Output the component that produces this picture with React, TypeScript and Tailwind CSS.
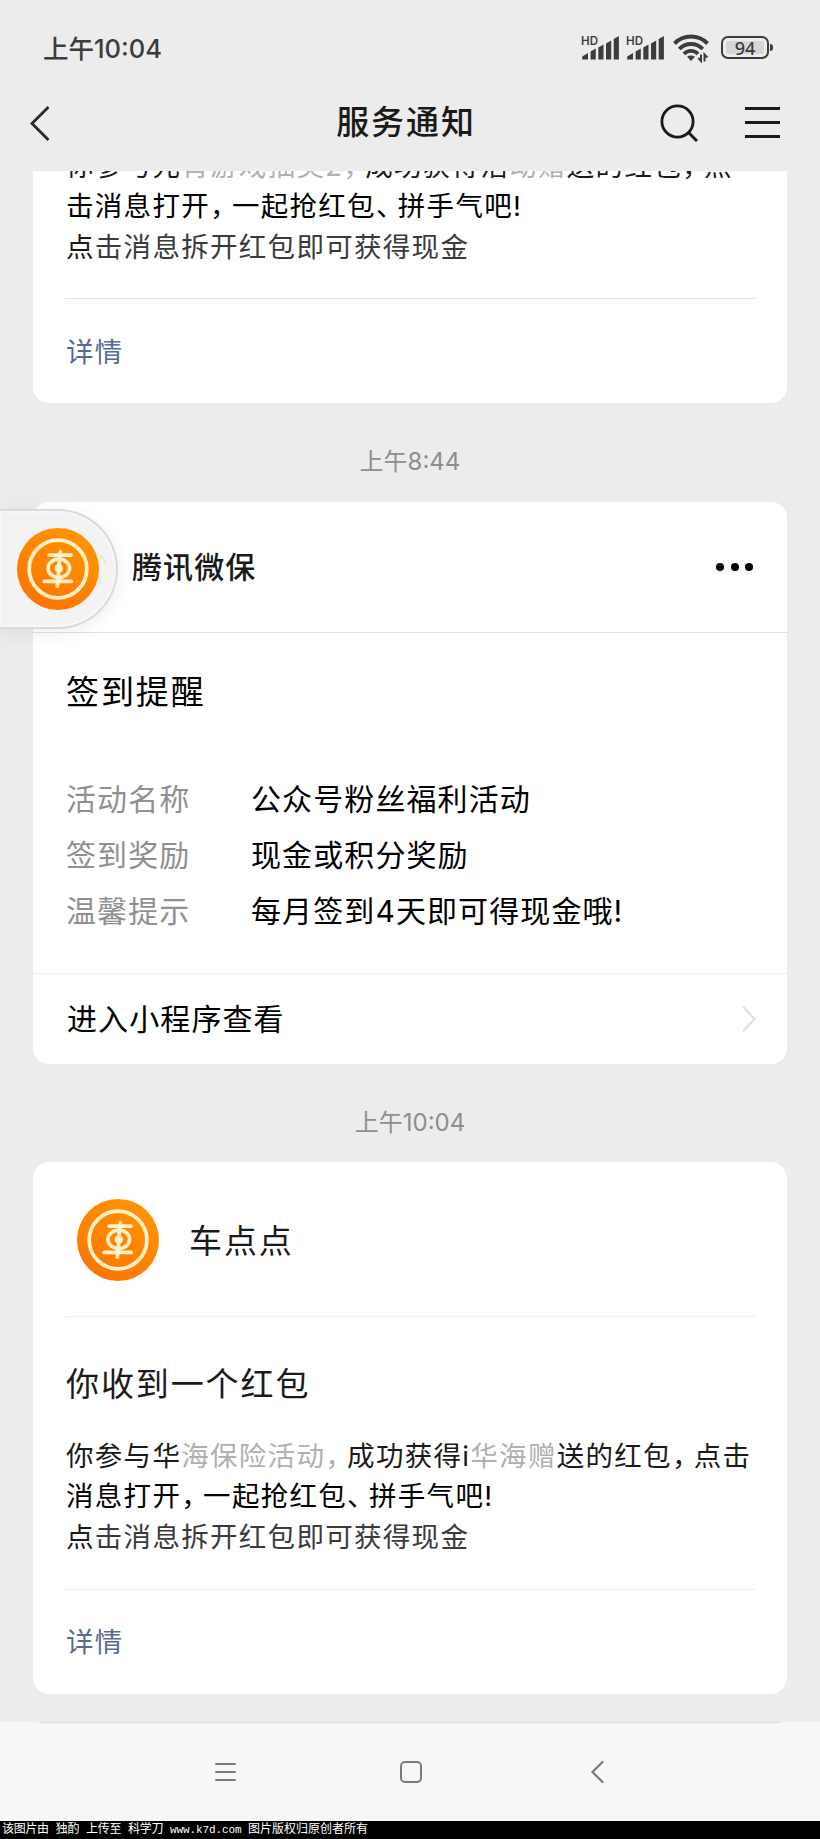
import type { ReactNode } from "react";
import { clsx } from "clsx";

type Tone = "ink" | "strong" | "soft" | "muted";

type Run = { text: string; tone: Tone };

type Row = { label: string; value: string };

const TONES: Record<Tone, string> = {
  ink: "text-[#1a1a1a]",
  strong: "text-black",
  soft: "text-[#3a3a3a]",
  muted: "text-[#b0b0b0]",
};

const LOTTERY_LINES: Run[][] = [
  [
    { text: "你参与元", tone: "ink" },
    { text: "宵游戏抽奖2，", tone: "muted" },
    { text: "成功获得活", tone: "ink" },
    { text: "动赠", tone: "muted" },
    { text: "送的红包，点", tone: "ink" },
  ],
  [{ text: "击消息打开，一起抢红包、拼手气吧!", tone: "strong" }],
  [
    { text: "点", tone: "ink" },
    { text: "击消息拆开红包即可获得现金", tone: "soft" },
  ],
];

const INSURANCE_LINES: Run[][] = [
  [
    { text: "你参与华", tone: "ink" },
    { text: "海保险活动，", tone: "muted" },
    { text: "成功获得i", tone: "ink" },
    { text: "华海赠", tone: "muted" },
    { text: "送的红包，点击", tone: "ink" },
  ],
  [{ text: "消息打开，一起抢红包、拼手气吧!", tone: "strong" }],
  [
    { text: "点", tone: "ink" },
    { text: "击消息拆开红包即可获得现金", tone: "soft" },
  ],
];

const ROWS: Row[] = [
  { label: "活动名称", value: "公众号粉丝福利活动" },
  { label: "签到奖励", value: "现金或积分奖励" },
  { label: "温馨提示", value: "每月签到4天即可得现金哦!" },
];

// full-width punctuation is set a bit tighter than the characters
function tighten(text: string) {
  return text.split(/([，、])/).map((part, i) =>
    /[，、]/.test(part) ? (
      <span key={i} className="tracking-[-5.6px]">
        {part}
      </span>
    ) : (
      part
    )
  );
}

function MessageLines({ lines, className }: { lines: Run[][]; className?: string }) {
  return (
    <div className={clsx("text-[27.5px] leading-[40.3px] tracking-[1.3px] whitespace-nowrap", className)}>
      {lines.map((line, i) => (
        <p key={i}>
          {line.map((run, j) => (
            <span key={j} className={TONES[run.tone]}>
              {tighten(run.text)}
            </span>
          ))}
        </p>
      ))}
    </div>
  );
}

function CoinLogo() {
  return (
    <svg width="82" height="82" viewBox="0 0 82 82" className="relative shrink-0">
      <defs>
        <linearGradient id="coin" x1="0.8" y1="0" x2="0.2" y2="1">
          <stop offset="0" stopColor="#ff9600" />
          <stop offset="1" stopColor="#ff7300" />
        </linearGradient>
      </defs>
      <circle cx="41" cy="41" r="41" fill="url(#coin)" />
      <g fill="none" stroke="#fff0c8" strokeLinecap="round">
        <circle cx="41" cy="41" r="28.8" strokeWidth="3.8" />
        <path d="M32.3 27.200H53.800" strokeWidth="3.800" />
        <path d="M27.300 53.400H54.200" strokeWidth="3.800" />
        <ellipse cx="41.800" cy="40.300" rx="10.800" ry="9.200" strokeWidth="3.600" />
        <path d="M43.300 23.800C41.800 32 42 48 40.300 58.200" strokeWidth="3.800" />
      </g>
      <circle cx="41.800" cy="40.300" r="4.300" fill="#fff0c8" />
    </svg>
  );
}

function Signal() {
  return (
    <svg width="38" height="25" viewBox="0 0 38 25" className="overflow-visible" fill="#3c3c3c">
      <text x="0" y="9.500" fontSize="12" fontWeight="600" textLength="17" lengthAdjust="spacingAndGlyphs">
        HD
      </text>
      <path d="M1.200 24.500v-3l5.800-3.500v6.500zM9.600 24.500v-8l5.200-3v11zM17.300 24.500V12.500l5.200-3v15zM25 24.500V8.500l5.200-3v19zM32.700 24.500V4l5.200-3v23.500z" />
    </svg>
  );
}

function StatusBar() {
  return (
    <div className="flex h-[75px] items-end justify-between pr-[47px] pb-[8px] pl-[43px] text-[#3c3c3c]">
      <div className="flex h-9 items-center text-[25.5px] leading-none font-medium">上午10:04</div>
      <div className="mb-[6px] flex items-center">
        <Signal />
        <div className="w-[7px]" />
        <Signal />
        <svg width="36" height="27" viewBox="0 0 36 27" className="ml-[9px] overflow-visible" fill="none" stroke="#3c3c3c">
          <path d="M1.500 9.500a23 23 0 0 1 33 0" strokeWidth="4" />
          <path d="M6.300 15a16 16 0 0 1 23.400 0" strokeWidth="4" />
          <path d="M11 20a9.500 9.500 0 0 1 14 0" strokeWidth="3.800" />
          <path d="M14 22.800q4-2.600 8 0L18 27z" fill="#3c3c3c" stroke="none" />
          <path d="M28 20.500V27l-2.700-3M31.500 27.500v-7l2.800 3" strokeWidth="2" />
        </svg>
        <div className="ml-3 flex items-center">
          <div className="flex h-[23px] w-[48px] items-center justify-center rounded-[7px] border-[2.5px] border-[#3c3c3c] p-[3px]">
            <div className="flex h-full w-full items-center justify-center rounded-[2px] bg-[#d6d6d6] font-['Noto_Sans',sans-serif] text-[18px] leading-none font-medium">
              94
            </div>
          </div>
          <div className="ml-px h-[7px] w-[3px] rounded-r-sm bg-[#3c3c3c]" />
        </div>
      </div>
    </div>
  );
}

function TitleBar() {
  return (
    <div className="grid h-24 grid-cols-[1fr_auto_1fr] items-center pr-[40px] pb-px pl-[30px]">
      <svg width="20" height="36" viewBox="0 0 20 36" fill="none" stroke="#2a2a2a" strokeWidth="2.8">
        <path d="M18.500 2L2 18.500L18.500 35" />
      </svg>
      <h1 className="translate-x-px text-[33px] leading-none font-medium tracking-[1.9px] text-[#1a1a1a]">服务通知</h1>
      <div className="flex items-center justify-end gap-[47px]">
        <svg width="38" height="38" viewBox="0 0 38 38" fill="none" stroke="#1a1a1a" strokeWidth="2.8">
          <circle cx="17.500" cy="17.500" r="15.600" />
          <path d="M28.500 28.500l8.500 8.500" strokeWidth="3" />
        </svg>
        <div className="flex w-[35px] flex-col gap-[11px]">
          <div className="h-[3px] bg-[#1a1a1a]" />
          <div className="h-[3px] bg-[#1a1a1a]" />
          <div className="h-[3px] bg-[#1a1a1a]" />
        </div>
      </div>
    </div>
  );
}

function TimeLabel({ children, className }: { children: ReactNode; className: string }) {
  return (
    <div className={clsx("flex items-center justify-center pt-[19px] text-[24px] leading-none text-[#8e8e8e]", className)}>
      {children}
    </div>
  );
}

function DetailLink() {
  return (
    <div className="flex flex-1 items-center pt-[3px] text-[27.5px] leading-none tracking-[1.3px] text-[#576b95]">详情</div>
  );
}

function CheckInCard() {
  return (
    <section className="flex h-[562px] flex-col rounded-2xl bg-white text-[30px] tracking-[1.1px]">
      <div className="flex h-[131px] items-center justify-between border-b border-[#e2e2e2] pr-[34px] pl-[99px]">
        <h2 className="font-medium text-[#1a1a1a]">腾讯微保</h2>
        <div className="flex gap-[6.5px]">
          <div className="size-2 rounded-full bg-black" />
          <div className="size-2 rounded-full bg-black" />
          <div className="size-2 rounded-full bg-black" />
        </div>
      </div>
      <div className="flex-1 px-[33px] pt-[34px]">
        <h3 className="text-[33px] leading-[50px] tracking-[1.9px] text-black">签到提醒</h3>
        <dl className="mt-[54px]">
          {ROWS.map((row) => (
            <div key={row.label} className="flex leading-[56.2px]">
              <dt className="w-[185px] text-[#909090]">{row.label}</dt>
              <dd className="text-black">{row.value}</dd>
            </div>
          ))}
        </dl>
      </div>
      <div className="flex h-[91px] items-center justify-between border-t border-[#efefef] pr-[31px] pl-[34px] text-black">
        进入小程序查看
        <svg width="14" height="28" viewBox="0 0 14 28" fill="none" stroke="#e2e2e2" strokeWidth="2.500">
          <path d="M1 1.500L12.500 14L1 26.500" />
        </svg>
      </div>
    </section>
  );
}

function RedPacketCard() {
  return (
    <section className="flex h-[531.5px] flex-col rounded-2xl bg-white px-8">
      <div className="flex h-[155px] items-center gap-[30px] border-b border-[#ececec] pt-[2px] pl-3">
        <CoinLogo />
        <h2 className="pt-[3px] text-[33px] tracking-[1.9px] text-[#1a1a1a]">车点点</h2>
      </div>
      <h3 className="mt-[42px] pl-px text-[33px] leading-[50px] tracking-[1.9px] text-[#1a1a1a]">你收到一个红包</h3>
      <MessageLines lines={INSURANCE_LINES} className="mt-[27px] mb-[32px] pl-px" />
      <div className="flex flex-1 border-t border-[#ececec] pl-px">
        <DetailLink />
      </div>
    </section>
  );
}

// chat head docked to the left edge, over the cards
function FloatingBubble() {
  return (
    <div className="absolute top-[509px] left-0 flex h-[120px] w-[118px] items-center rounded-r-full border-2 border-l-0 border-[#dadada] bg-[#f2f2f2]/95 pl-[17px] shadow-[0_4px_18px_rgba(0,0,0,0.07),inset_0_0_0_2px_rgba(255,255,255,0.4)]">
      {/* sender avatar showing faintly through */}
      <svg width="12" height="36" viewBox="0 0 12 36" className="absolute top-[40px] left-[96px]" fill="none" strokeWidth="2">
        <path d="M1 2Q8 6 10 14" stroke="#fbe3cb" />
        <path d="M3 16V33" stroke="#e9e9e9" strokeWidth="3" />
      </svg>
      <CoinLogo />
    </div>
  );
}

function NavBar() {
  return (
    <nav className="h-[99px] bg-[#f7f7f7]">
      <div className="mx-[39px] h-px bg-[#dedede]" />
      <div className="flex h-[97px] items-center pl-[215px]">
        <div className="flex w-[21px] flex-col gap-[6px]">
          <div className="h-[2px] rounded bg-[#7a7a7a]" />
          <div className="h-[2px] rounded bg-[#7a7a7a]" />
          <div className="h-[2px] rounded bg-[#7a7a7a]" />
        </div>
        <div className="ml-[163.500px] size-[22px] rounded-[5px] border-2 border-[#7a7a7a]" />
        <svg width="14" height="24" viewBox="0 0 14 24" className="ml-[168.500px]" fill="none" stroke="#7a7a7a" strokeWidth="2.200" strokeLinecap="round">
          <path d="M12.500 2L2.500 12L12.500 22" />
        </svg>
      </div>
    </nav>
  );
}

export default function App() {
  return (
    <div className="relative flex h-[1839px] w-[820px] flex-col overflow-hidden bg-[#ececec] font-['Inter','Noto_Sans_CJK_SC',sans-serif]">
      <header className="h-[171px]">
        <StatusBar />
        <TitleBar />
      </header>
      <main className="h-[1551px] overflow-hidden px-[33px]">
        <section className="flex h-[232px] flex-col overflow-hidden rounded-b-2xl bg-white px-8">
          <MessageLines lines={LOTTERY_LINES} className="-mt-[25px] mb-[31px] pl-px" />
          <div className="flex flex-1 border-t border-[#e4e4e4] pl-px">
            <DetailLink />
          </div>
        </section>
        <TimeLabel className="h-[99px]">上午8:44</TimeLabel>
        <CheckInCard />
        <TimeLabel className="h-[98px]">上午10:04</TimeLabel>
        <RedPacketCard />
      </main>
      <FloatingBubble />
      <NavBar />
      <footer className="flex h-[18px] items-center bg-black pl-[2px] font-['Liberation_Mono','Noto_Sans_CJK_SC',monospace] text-[12px] leading-none whitespace-pre text-white">
        <span className="tracking-[-0.3px]">该图片由 独酌 上传至 科学刀 </span>
        <span className="text-[11px] tracking-[-0.1px]">www.k7d.com </span>
        <span>图片版权归原创者所有</span>
      </footer>
    </div>
  );
}
